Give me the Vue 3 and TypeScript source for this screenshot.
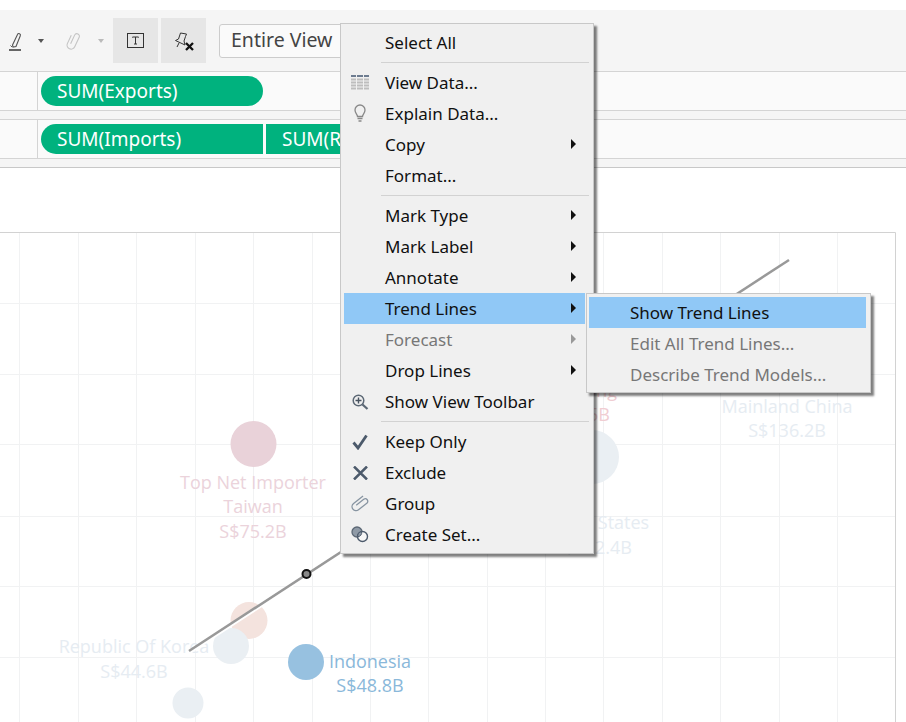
<script setup lang="ts">
type Item = { label?: string; icon?: string; arrow?: boolean; active?: boolean; disabled?: boolean; sep?: boolean }

const menu: Item[] = [
  { label: 'Select All' },
  { sep: true },
  { label: 'View Data...', icon: 'grid' },
  { label: 'Explain Data...', icon: 'bulb' },
  { label: 'Copy', arrow: true },
  { label: 'Format...' },
  { sep: true },
  { label: 'Mark Type', arrow: true },
  { label: 'Mark Label', arrow: true },
  { label: 'Annotate', arrow: true },
  { label: 'Trend Lines', arrow: true, active: true },
  { label: 'Forecast', arrow: true, disabled: true },
  { label: 'Drop Lines', arrow: true },
  { label: 'Show View Toolbar', icon: 'zoom' },
  { sep: true },
  { label: 'Keep Only', icon: 'check' },
  { label: 'Exclude', icon: 'x' },
  { label: 'Group', icon: 'clip' },
  { label: 'Create Set...', icon: 'set' }
]

const submenu: Item[] = [
  { label: 'Show Trend Lines', active: true },
  { label: 'Edit All Trend Lines...', disabled: true },
  { label: 'Describe Trend Models...', disabled: true }
]

const vLines = [19, 78, 136, 195, 253, 312, 370, 428, 487, 545, 603, 662, 720, 779, 837]
const hLines = [303, 374, 444, 516, 586, 657]

const bubbles = [
  { x: 253.5, y: 444, r: 23, fill: '#e9d2d9' },
  { x: 249, y: 620.5, r: 18.5, fill: '#f4e3de' },
  { x: 231, y: 646, r: 18, fill: '#eaeff3' },
  { x: 188, y: 703, r: 15.5, fill: '#eaeff3' },
  { x: 306, y: 662, r: 18, fill: '#97c1e0' },
  { x: 592, y: 457, r: 27, fill: '#eaeff3' }
]

const labels = [
  { x: 253, y: 489, text: 'Top Net Importer', color: '#ebd3db' },
  { x: 253, y: 513, text: 'Taiwan', color: '#ebd3db' },
  { x: 253, y: 538, text: 'S$75.2B', color: '#ebd3db' },
  { x: 134, y: 653, text: 'Republic Of Korea', color: '#e6ecf2' },
  { x: 134, y: 678, text: 'S$44.6B', color: '#e6ecf2' },
  { x: 370, y: 668, text: 'Indonesia', color: '#8ab8da' },
  { x: 370, y: 692, text: 'S$48.8B', color: '#8ab8da' },
  { x: 787, y: 413, text: 'Mainland China', color: '#e6ecf2' },
  { x: 787, y: 437, text: 'S$136.2B', color: '#e6ecf2' },
  { x: 593, y: 529, text: 'United States', color: '#e6ecf2' },
  { x: 593, y: 554, text: 'S$122.4B', color: '#e6ecf2' },
  { x: 571, y: 397, text: 'Hong Kong', color: '#f0cdd2' },
  { x: 571, y: 421, text: 'S$105.5B', color: '#f0cdd2' }
]
</script>

<template>
  <div class="page">
    <div class="toolbar">
      <svg class="tool-icon" width="14" height="22" viewBox="0 0 14 22">
        <path d="M3.500 15 8.500 4.500c.4-1 .9-1.200 2-.8 1 .4 1.200 1 .8 2L7 16.500l-3 .5z" fill="none" stroke="#555" stroke-width="1.100" />
        <path d="M1.500 15.500l1.500 1.500" stroke="#555" stroke-width="1" />
        <path d="M0 20h12" stroke="#666" stroke-width="2" />
      </svg>
      <span class="caret dark"></span>
      <svg class="tool-icon clip-tool" width="14" height="22" viewBox="0 0 14 22">
        <g transform="rotate(25 7 11) translate(-2 0.500)">
          <path d="M8 14V4.500a2.500 2.500 0 0 1 5 0V15a4 4 0 0 1-8 0V6" fill="none" stroke="#c4c4c4" stroke-width="1.100" />
        </g>
      </svg>
      <span class="caret light"></span>
      <div class="tool-btn first">
        <svg width="18" height="16" viewBox="0 0 18 16">
          <rect x=".5" y=".5" width="16" height="14" fill="none" stroke="#333" />
          <path d="M5.500 4.500v-.5h6v.5M8.500 4v7M7 11h3" fill="none" stroke="#333" />
        </svg>
      </div>
      <div class="tool-btn">
        <svg width="20" height="20" viewBox="0 0 20 20">
          <path d="M6.500 2 12.500 3 11.500 5.500 10 10 11 14 1.500 9.500 4.500 8zM5 12 3 16" fill="none" stroke="#333" stroke-width="1" />
          <path d="M12 12l7 7M19 12l-7 7" stroke="#111" stroke-width="2.300" />
        </svg>
      </div>
      <div class="select">Entire View</div>
    </div>

    <div class="shelf">
      <div class="shelf-label"></div>
      <div class="pills"><span class="pill round">SUM(Exports)</span></div>
    </div>
    <div class="gap"></div>
    <div class="shelf">
      <div class="shelf-label"></div>
      <div class="pills">
        <span class="pill round-left">SUM(Imports)</span>
        <span class="pill clipped">SUM(Re-exports)</span>
      </div>
    </div>
    <div class="gap last"></div>

    <svg class="chart" width="906" height="722" viewBox="0 0 906 722">
      <path d="M0 232.500H895.500V722" fill="none" stroke="#d2d2d2" />
      <path
        v-for="x in vLines"
        :key="'v' + x"
        :d="`M${x + 0.5} 233V722`"
        stroke="#f1f2f3"
      />
      <path
        v-for="y in hLines"
        :key="'h' + y"
        :d="`M0 ${y + 0.5}H895`"
        stroke="#f1f2f3"
      />
      <circle
        v-for="b in bubbles"
        :key="b.x"
        :cx="b.x"
        :cy="b.y"
        :r="b.r"
        :fill="b.fill"
      />
      <text
        v-for="l in labels"
        :key="l.text"
        class="mark-label"
        :x="l.x"
        :y="l.y"
        :fill="l.color"
        text-anchor="middle"
      >{{ l.text }}</text>
      <path d="M190 652.500 790 261.500" stroke="#fff" stroke-width="2.500" />
      <path d="M189 651 789 260" stroke="#999" stroke-width="2.500" />
      <circle cx="306.500" cy="574" r="4" fill="#888" stroke="#111" stroke-width="2" />
    </svg>

    <div class="menu main-menu">
      <template v-for="(item, i) in menu" :key="i">
        <div v-if="item.sep" class="sep"></div>
        <div v-else class="item" :class="{ active: item.active, disabled: item.disabled }">
          <span class="icon">
            <svg v-if="item.icon === 'grid'" width="18" height="15" viewBox="0 0 18 15">
              <path d="M0 1h5M6 1h6M13 1h5" stroke="#6d7c90" stroke-width="2" />
              <path d="M0 4.500h5M6 4.500h6M13 4.500h5M0 7.500h5M6 7.500h6M13 7.500h5M0 10.500h5M6 10.500h6M13 10.500h5M0 13.500h5M6 13.500h6M13 13.500h5" stroke="#bdbdbd" stroke-width="2" />
            </svg>
            <svg v-else-if="item.icon === 'bulb'" width="12" height="19" viewBox="0 0 12 19">
              <path d="M3.500 12.500c0-2-2.500-3-2.500-6.500a5 5 0 0 1 10 0c0 3.500-2.500 4.500-2.500 6.500z" fill="none" stroke="#888" stroke-width="1.300" />
              <path d="M3.500 14.500h5M4.500 17h3" stroke="#888" stroke-width="1.300" />
            </svg>
            <svg v-else-if="item.icon === 'zoom'" width="17" height="16" viewBox="0 0 17 16">
              <circle cx="6.500" cy="6.500" r="5.300" fill="none" stroke="#5c6875" stroke-width="1.500" />
              <path d="M6.500 3.500v6M3.500 6.500h6" stroke="#47525f" stroke-width="1.400" />
              <path d="M10.500 10.500 15.500 15" stroke="#5c6875" stroke-width="2.300" />
            </svg>
            <svg v-else-if="item.icon === 'check'" width="16" height="16" viewBox="0 0 16 16">
              <path d="M1.500 8.500 6 14 14.500 1.500" fill="none" stroke="#4c5a6b" stroke-width="2.800" />
            </svg>
            <svg v-else-if="item.icon === 'x'" width="15" height="14" viewBox="0 0 15 14">
              <path d="M1 .5 14 13.500M14 .5 1 13.500" stroke="#4c5a6b" stroke-width="2.500" />
            </svg>
            <svg v-else-if="item.icon === 'clip'" width="18" height="17" viewBox="0 0 18 17">
              <g transform="rotate(52 9 8.500) translate(0 -1.500)">
                <path d="M8 14V4.500a2.500 2.500 0 0 1 5 0V15a4 4 0 0 1-8 0V3" fill="none" stroke="#8794a1" stroke-width="1.300" />
              </g>
            </svg>
            <svg v-else-if="item.icon === 'set'" width="18" height="17" viewBox="0 0 18 17">
              <circle cx="6" cy="6" r="5" fill="#8f9aa6" stroke="#5c6875" stroke-width="1.300" />
              <circle cx="11.500" cy="10.500" r="5" fill="#f6f6f6" stroke="#4c5a6b" stroke-width="1.400" />
              <path d="M6.700 10.900a5 5 0 0 1 4-5.300 5 5 0 0 1-4 5.300z" fill="#8f9aa6" stroke="#4c5a6b" stroke-width="1" />
            </svg>
          </span>
          <span class="item-label">{{ item.label }}</span>
          <span v-if="item.arrow" class="arrow"></span>
        </div>
      </template>
    </div>

    <div class="menu sub-menu">
      <div
        v-for="item in submenu"
        :key="item.label"
        class="item"
        :class="{ active: item.active, disabled: item.disabled }"
      >
        <span class="item-label">{{ item.label }}</span>
      </div>
    </div>
  </div>
</template>

<style scoped>
.page {
  position: relative;
  width: 906px;
  height: 722px;
  overflow: hidden;
  background: #fff;
  padding-top: 10px;
  box-sizing: border-box;
  font-family: "Noto Sans", sans-serif;
}
.toolbar {
  height: 61px;
  background: #f5f5f5;
  display: flex;
  align-items: center;
  padding-left: 9px;
  box-sizing: border-box;
}
.tool-icon { display: block; }
.clip-tool { margin-left: 22px; }
.caret {
  width: 0;
  height: 0;
  margin-left: 15px;
  border-left: 3px solid transparent;
  border-right: 3px solid transparent;
  border-top: 4px solid #555;
}
.caret.light { border-top-color: #bbb; margin-left: 18px; }
.tool-btn {
  width: 45px;
  height: 45px;
  background: #e6e6e6;
  margin-left: 3px;
  display: flex;
  align-items: center;
  justify-content: center;
}
.tool-btn.first { margin-left: 9px; }
.select {
  width: 160px;
  height: 34px;
  margin-left: 13px;
  box-sizing: border-box;
  border: 1px solid #ccc;
  border-radius: 3px;
  background: #fafafa;
  padding-left: 11px;
  line-height: 30px;
  font-size: 19.500px;
  color: #444;
}
.shelf {
  height: 40px;
  box-sizing: border-box;
  display: flex;
  background: #fafafa;
  border-top: 1px solid #d4d4d4;
  border-bottom: 1px solid #d4d4d4;
}
.shelf-label {
  width: 37px;
  border-right: 1px solid #d4d4d4;
}
.pills {
  display: flex;
  gap: 3px;
  padding: 4px 0 0 3px;
}
.pill {
  width: 222px;
  height: 30px;
  box-sizing: border-box;
  background: #00b27e;
  color: #fff;
  font-size: 19px;
  line-height: 30px;
  padding-left: 16px;
  white-space: nowrap;
  overflow: hidden;
}
.round { border-radius: 15px; }
.round-left { border-radius: 15px 0 0 15px; }
.clipped { width: 76px; }
.gap {
  height: 8px;
  background: #f5f5f5;
}
.gap.last {
  border-bottom: 1px solid #c8c8c8;
}
.chart {
  position: absolute;
  left: 0;
  top: 0;
}
.mark-label {
  font-family: "Open Sans", sans-serif;
  font-size: 18px;
}
.menu {
  position: absolute;
  box-sizing: border-box;
  background: #f0f0f0;
  border: 1px solid #c8c8c8;
  box-shadow: 3px 3px 2px rgba(0, 0, 0, 0.5);
  font-size: 17px;
  color: #111;
}
.main-menu {
  left: 340px;
  top: 23px;
  width: 254px;
  height: 531px;
  padding: 3px;
}
.sub-menu {
  left: 586px;
  top: 293px;
  width: 285px;
  height: 100px;
  padding: 3px 4px 3px 2px;
}
.item {
  height: 31px;
  display: flex;
  align-items: center;
  position: relative;
}
.main-menu .item { margin-right: 5px; }
.main-menu .item-label { margin-left: 5px; }
.sub-menu .item-label { margin-left: 41px; }
.item.active { background: #90c8f6; }
.item.disabled { color: #777; }
.icon {
  width: 32px;
  margin-right: 4px;
  display: flex;
  justify-content: center;
  flex: none;
}
.sep {
  height: 1px;
  margin: 4px 1px 4px 37px;
  background: #d2d2d2;
}
.arrow {
  position: absolute;
  left: 227px;
  top: 10px;
  width: 0;
  height: 0;
  border-top: 5px solid transparent;
  border-bottom: 5px solid transparent;
  border-left: 5px solid #111;
}
.disabled .arrow { border-left-color: #999; }
</style>
